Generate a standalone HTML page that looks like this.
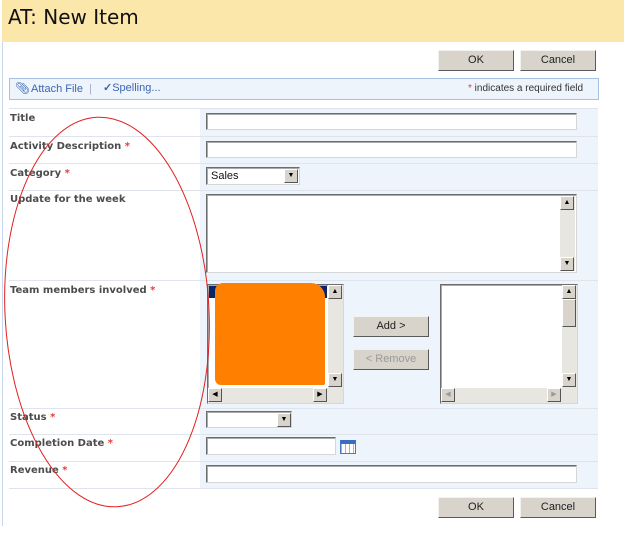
<!DOCTYPE html>
<html><head><style>
*{margin:0;padding:0;box-sizing:border-box}
body{width:624px;height:542px;background:#fff;position:relative;overflow:hidden;font-family:"Liberation Sans",sans-serif;font-size:11px;color:#4c4c4c}
.a{position:absolute}
.btn{position:absolute;width:76px;height:21px;background:#d8d4cc;border:1px solid;border-color:#f4f2ee #5a5a5a #5a5a5a #f4f2ee;text-align:center;line-height:19px;color:#222;font-size:11px}
.inp{position:absolute;background:#fff;border:1px solid;border-color:#6d6d6d #d6d6d6 #d6d6d6 #6d6d6d;box-shadow:inset 1px 1px 0 #aaa}
.lbl{position:absolute;left:10px;font-weight:bold;font-family:"DejaVu Sans",sans-serif;font-size:10px;color:#4c4c4c}
.st{color:#e04040}
.row{position:absolute;left:9px;width:589px;height:1px;background:#dfe4ec}
.sb{position:absolute;background:#e8e6e0}
.ar{position:absolute;width:14px;height:14px;background:#d8d4cc;border:1px solid;border-color:#fff #555 #555 #fff;font-size:7px;line-height:12px;text-align:center;color:#000}
</style></head><body>
<div class="a" style="left:2px;top:0;width:622px;height:42px;background:#fce7aa"></div>
<div class="a" style="left:8px;top:5px;font-size:20px;color:#111;font-family:'DejaVu Sans',sans-serif">AT: New Item</div>
<div class="a" style="left:2px;top:42px;width:1px;height:484px;background:#c6d6ec"></div>
<div class="btn" style="left:438px;top:50px">OK</div>
<div class="btn" style="left:520px;top:50px">Cancel</div>
<div class="a" style="left:9px;top:78px;width:590px;height:22px;background:#eef4fc;border:1px solid #a6c0e2"></div>
<div class="a" style="left:15px;top:81px;color:#3a66b0;font-size:12px">&#x1F4CE;&#xFE0E;</div>
<div class="a" style="left:31px;top:83px;color:#3a66b0">Attach File <span style="color:#aac">&nbsp;|</span></div>
<div class="a" style="left:103px;top:81px;color:#3a66b0;font-size:11px"><b style="font-size:11px">✓</b>Spelling...</div>
<div class="a" style="left:468px;top:83px;color:#333;font-size:10px"><span class="st">*</span> indicates a required field</div>
<div class="a" style="left:200px;top:108px;width:398px;height:380px;background:#eef4fb"></div>
<div class="row" style="top:108px"></div><div class="row" style="top:136px"></div><div class="row" style="top:163px"></div><div class="row" style="top:190px"></div><div class="row" style="top:280px"></div><div class="row" style="top:408px"></div><div class="row" style="top:434px"></div><div class="row" style="top:461px"></div><div class="row" style="top:488px"></div>
<div class="lbl" style="top:113px">Title</div>
<div class="lbl" style="top:141px">Activity Description <span class="st">*</span></div>
<div class="lbl" style="top:168px">Category <span class="st">*</span></div>
<div class="lbl" style="top:194px">Update for the week</div>
<div class="lbl" style="top:285px">Team members involved <span class="st">*</span></div>
<div class="lbl" style="top:412px">Status <span class="st">*</span></div>
<div class="lbl" style="top:438px">Completion Date <span class="st">*</span></div>
<div class="lbl" style="top:465px">Revenue <span class="st">*</span></div>
<div class="inp" style="left:206px;top:113px;width:371px;height:17px"></div>
<div class="inp" style="left:206px;top:141px;width:371px;height:17px"></div>
<div class="inp" style="left:206px;top:167px;width:94px;height:18px;padding:2px 4px;font-size:11px;color:#111">Sales</div>
<div class="ar" style="left:284px;top:169px">▼</div>
<div class="inp" style="left:206px;top:194px;width:371px;height:79px"></div>
<div class="sb" style="left:560px;top:196px;width:15px;height:75px"></div>
<div class="ar" style="left:560px;top:196px">▲</div><div class="ar" style="left:560px;top:257px">▼</div>
<div class="inp" style="left:207px;top:284px;width:137px;height:120px"></div>
<div class="a" style="left:209px;top:286px;width:118px;height:12px;background:#0a246a"></div>
<div class="sb" style="left:328px;top:285px;width:15px;height:103px"></div>
<div class="ar" style="left:328px;top:285px">▲</div><div class="ar" style="left:328px;top:373px">▼</div>
<div class="sb" style="left:208px;top:388px;width:135px;height:15px"></div>
<div class="ar" style="left:208px;top:388px">◀</div><div class="ar" style="left:313px;top:388px">▶</div>
<div class="a" style="left:215px;top:283px;width:110px;height:102px;background:#ff8000;border-radius:8px 14px 2px 6px"></div>
<div class="btn" style="left:353px;top:316px">Add &gt;</div>
<div class="btn" style="left:353px;top:349px;color:#999">&lt; Remove</div>
<div class="inp" style="left:440px;top:284px;width:138px;height:120px"></div>
<div class="sb" style="left:562px;top:285px;width:15px;height:103px"></div>
<div class="ar" style="left:562px;top:285px">▲</div><div class="ar" style="left:562px;top:373px">▼</div>
<div class="ar" style="left:562px;top:299px;height:28px"></div>
<div class="sb" style="left:441px;top:388px;width:136px;height:15px"></div>
<div class="ar" style="left:441px;top:388px;color:#999">◀</div><div class="ar" style="left:547px;top:388px;color:#999">▶</div>
<div class="inp" style="left:206px;top:411px;width:86px;height:17px"></div>
<div class="ar" style="left:277px;top:413px">▼</div>
<div class="inp" style="left:206px;top:437px;width:130px;height:18px"></div>
<div class="a" style="left:340px;top:440px;width:16px;height:14px;background:#fff;border:1px solid #4a78c0;border-top:4px solid #3a6cc0;background-image:repeating-linear-gradient(90deg,#9bb 0 1px,transparent 1px 4px)"></div>
<div class="inp" style="left:206px;top:465px;width:371px;height:18px"></div>
<div class="btn" style="left:438px;top:497px">OK</div>
<div class="btn" style="left:520px;top:497px">Cancel</div>
<svg class="a" style="left:0;top:0" width="624" height="542"><ellipse cx="107" cy="312" rx="102" ry="195" transform="rotate(-3 107 312)" fill="none" stroke="#e02020" stroke-width="1"/></svg>
</body></html>
